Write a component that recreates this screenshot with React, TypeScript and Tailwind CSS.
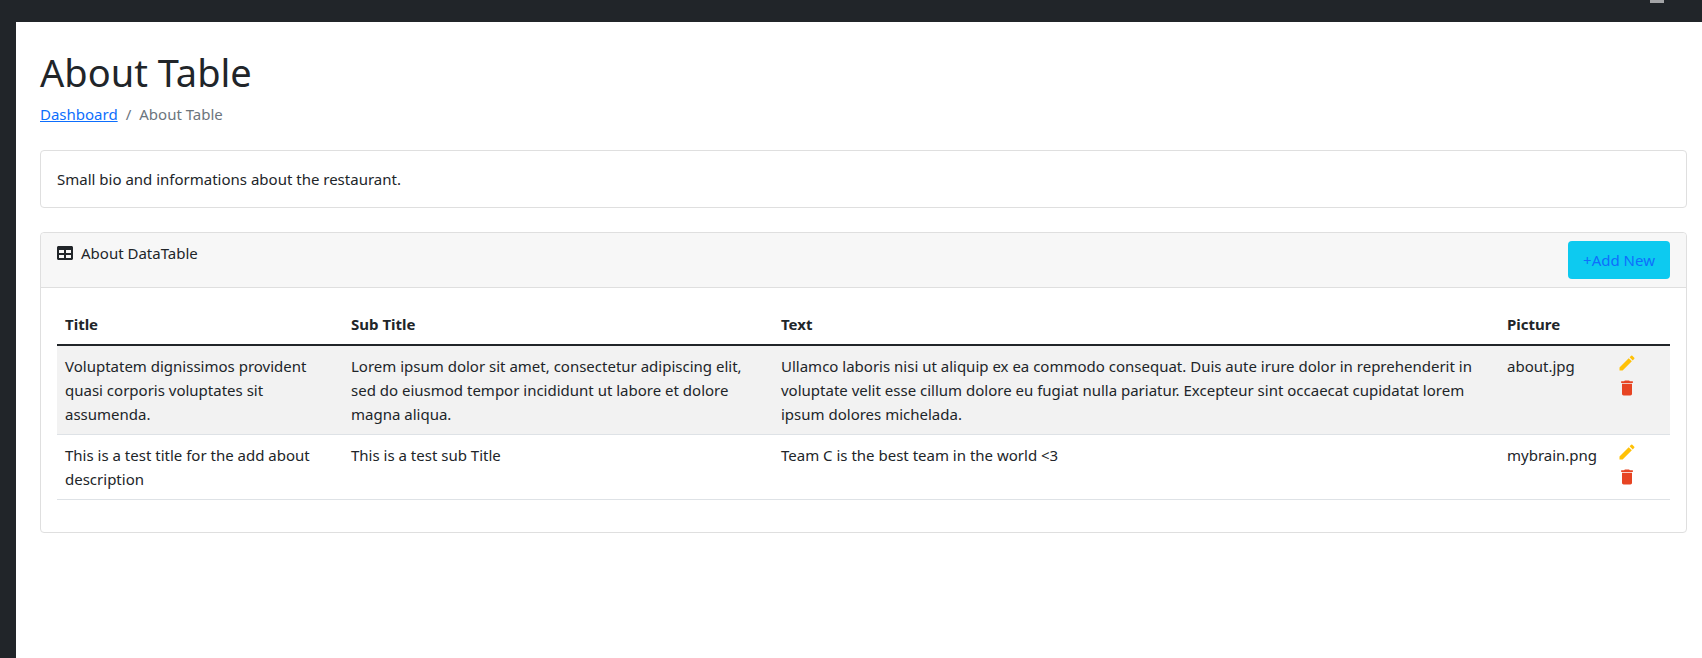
import { FaTable } from 'react-icons/fa';
import { MdDelete, MdEdit } from 'react-icons/md';

const rows = [
  {
    title: 'Voluptatem dignissimos provident quasi corporis voluptates sit assumenda.',
    subTitle: 'Lorem ipsum dolor sit amet, consectetur adipiscing elit, sed do eiusmod tempor incididunt ut labore et dolore magna aliqua.',
    text: 'Ullamco laboris nisi ut aliquip ex ea commodo consequat. Duis aute irure dolor in reprehenderit in voluptate velit esse cillum dolore eu fugiat nulla pariatur. Excepteur sint occaecat cupidatat lorem ipsum dolores michelada.',
    picture: 'about.jpg',
  },
  {
    title: 'This is a test title for the add about description',
    subTitle: 'This is a test sub Title',
    text: 'Team C is the best team in the world <3',
    picture: 'mybrain.png',
  },
];

export default function App() {
  return (
    <div className="h-screen overflow-hidden flex flex-col bg-[#212529] text-[#212529] text-[15px] leading-6 font-['Noto_Sans',sans-serif]">
      <div className="h-[22px] shrink-0 flex justify-end pr-[38px]">
        <div className="w-[14px] h-[3px] bg-[#a3a4a6]" />
      </div>

      <div className="flex-1 ml-4 bg-white pl-6 pr-[15px]">
        <h1 className="mt-[26px] mb-1.5 text-[38px] leading-[48px]">About Table</h1>
        <div className="flex mb-6 text-[#6c757d]">
          <a className="text-[#0d6efd] underline" href="#">Dashboard</a>
          <span className="px-2">/</span>
          <span>About Table</span>
        </div>

        <div className="mb-6 border border-[#dfdfdf] rounded-[4px] p-4 h-[58px] leading-6">
          Small bio and informations about the restaurant.
        </div>

        <div className="border border-[#dfdfdf] rounded-[4px]">
          <div className="flex justify-between px-4 py-2 bg-[#f7f7f7] border-b border-[#dfdfdf] rounded-t-[4px]">
            <div className="flex items-start">
              <FaTable className="w-4 h-4 mt-1 mr-2" />
              <span>About DataTable</span>
            </div>
            <button className="w-[102px] h-[38px] rounded-[4px] bg-[#0dcaf0] text-[#0d6efd]">+Add New</button>
          </div>

          <div className="p-4">
            <table className="w-full mb-4 table-fixed border-collapse text-left">
              <thead>
                <tr className="border-b-2 border-[#212529]">
                  <th className="w-[286px] p-2 font-bold">Title</th>
                  <th className="w-[430px] p-2 font-bold">Sub Title</th>
                  <th className="w-[726px] p-2 font-bold">Text</th>
                  <th className="w-[114px] p-2 font-bold">Picture</th>
                  <th className="p-2" />
                </tr>
              </thead>
              <tbody>
                {rows.map((row, i) => (
                  <tr key={row.picture} className={`border-b border-[#dee2e6] ${i === 0 ? 'bg-[#f2f2f2]' : ''}`}>
                    <td className="p-2 align-top">{row.title}</td>
                    <td className="p-2 align-top">{row.subTitle}</td>
                    <td className="p-2 align-top">{row.text}</td>
                    <td className="p-2 align-top">{row.picture}</td>
                    <td className="p-2 align-top">
                      <div className="flex flex-col -ml-1 -mt-px gap-[5px]">
                        <MdEdit className="w-5 h-5 text-[#ffc107]" />
                        <MdDelete className="w-5 h-5 text-[#e74423]" />
                      </div>
                    </td>
                  </tr>
                ))}
              </tbody>
            </table>
          </div>
        </div>
      </div>
    </div>
  );
}
